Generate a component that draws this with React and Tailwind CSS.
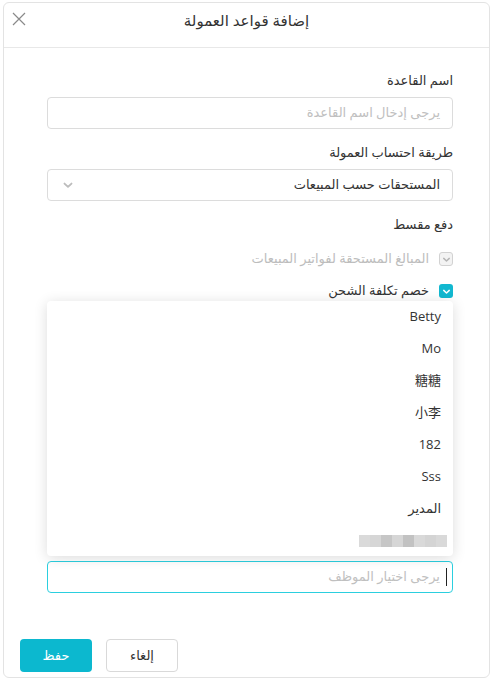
import React from "react";

const staff = ["Betty", "Mo", "糖糖", "小李", "182", "Sss", "المدير"];

const Chevron = ({ className }) => (
  <svg viewBox="0 0 12 12" className={className} fill="none" stroke="currentColor" strokeWidth="1.6" strokeLinecap="round" strokeLinejoin="round">
    <path d="M3 4.8 6 7.6 9 4.8" />
  </svg>
);

const Check = ({ checked, disabled, label }) => (
  <div className="flex items-center gap-[10px] h-[32px]">
    <span
      className={
        checked
          ? "flex items-center justify-center w-[14px] h-[14px] rounded-[3px] bg-[#12b8d0] text-white"
          : "flex items-center justify-center w-[14px] h-[14px] rounded-[3px] border border-[#d2d2d2] bg-[#f3f3f3] text-[#b5b5b5]"
      }
    >
      <Chevron className="w-[11px] h-[11px]" />
    </span>
    <span className={disabled ? "text-[#bdbdbd]" : "text-[#333]"}>{label}</span>
  </div>
);

export default function App() {
  return (
    <div
      dir="rtl"
      className="w-[490px] h-[680px] bg-white pt-[2px] text-[13px]"
      style={{ fontFamily: '"Open Sans", "DejaVu Sans", "Noto Sans CJK SC", sans-serif' }}
    >
      <div className="w-[487px] h-[676px] border border-[#e3e3e3] rounded-md flex flex-col">
        <div className="relative h-[45px] border-b border-[#e8e8e8] flex items-center justify-center pb-[10px]">
          <span className="text-[15px] text-[#333]">إضافة قواعد العمولة</span>
          <svg viewBox="0 0 14 14" className="absolute left-[8px] top-[9px] w-[14px] h-[14px] text-[#8a8a8a]" stroke="currentColor" strokeWidth="1.2">
            <path d="M1 1 13 13M13 1 1 13" />
          </svg>
        </div>

        <div className="flex-1 pl-[43px] pr-[36px] pt-[22px]">
          <div className="h-[20px] leading-[20px] text-[#333] mb-[7px]">اسم القاعدة</div>
          <div className="h-[32px] border border-[#dcdcdc] rounded-[4px] flex items-center px-3 text-[#c0c0c0] mb-[13px]">
            يرجى إدخال اسم القاعدة
          </div>

          <div className="h-[20px] leading-[20px] text-[#333] mb-[7px]">طريقة احتساب العمولة</div>
          <div className="h-[32px] border border-[#dcdcdc] rounded-[4px] flex items-center justify-between px-3 text-[#333] mb-[13px]">
            <span>المستحقات حسب المبيعات</span>
            <Chevron className="w-[14px] h-[14px] text-[#bcbcbc] ml-[1px]" />
          </div>

          <div className="h-[20px] leading-[20px] text-[#333] mb-[9px]">دفع مقسط</div>
          <Check checked={false} disabled label="المبالغ المستحقة لفواتير المبيعات" />
          <Check checked label="خصم تكلفة الشحن" />

          <div className="relative z-10 -mt-[6px] bg-white rounded-[4px] shadow-[0_2px_14px_rgba(0,0,0,0.14)]">
            {staff.map((name) => (
              <div key={name} className="h-[32px] flex items-center px-3 text-[#333]">
                {name}
              </div>
            ))}
            <div className="h-[31px] flex items-center px-[6px]">
              <div className="flex h-[12px]">
                {["#d9d9d9", "#d4d4d4", "#d9d9d9", "#c2c2c2", "#d6d6d6", "#c6c6c6", "#d6d6d6", "#dadada"].map((c, i) => (
                  <span key={i} className="w-[11px] h-[12px]" style={{ background: c }} />
                ))}
              </div>
            </div>
          </div>

          <div className="mt-[5px] h-[32px] border border-[#2bcfdf] rounded-[4px] flex items-center pr-[5px] text-[#c0c0c0]">
            <span className="w-px h-[18px] bg-[#222] ml-[6px]" />
            يرجى اختيار الموظف
          </div>
        </div>

        <div className="flex justify-end gap-[14px] pl-[16px] pb-[5px]">
          <button className="w-[72px] h-[33px] rounded-[4px] border border-[#d9d9d9] bg-white text-[#333]">إلغاء</button>
          <button className="w-[72px] h-[33px] rounded-[4px] bg-[#0cb8cf] text-white">حفظ</button>
        </div>
      </div>
    </div>
  );
}
